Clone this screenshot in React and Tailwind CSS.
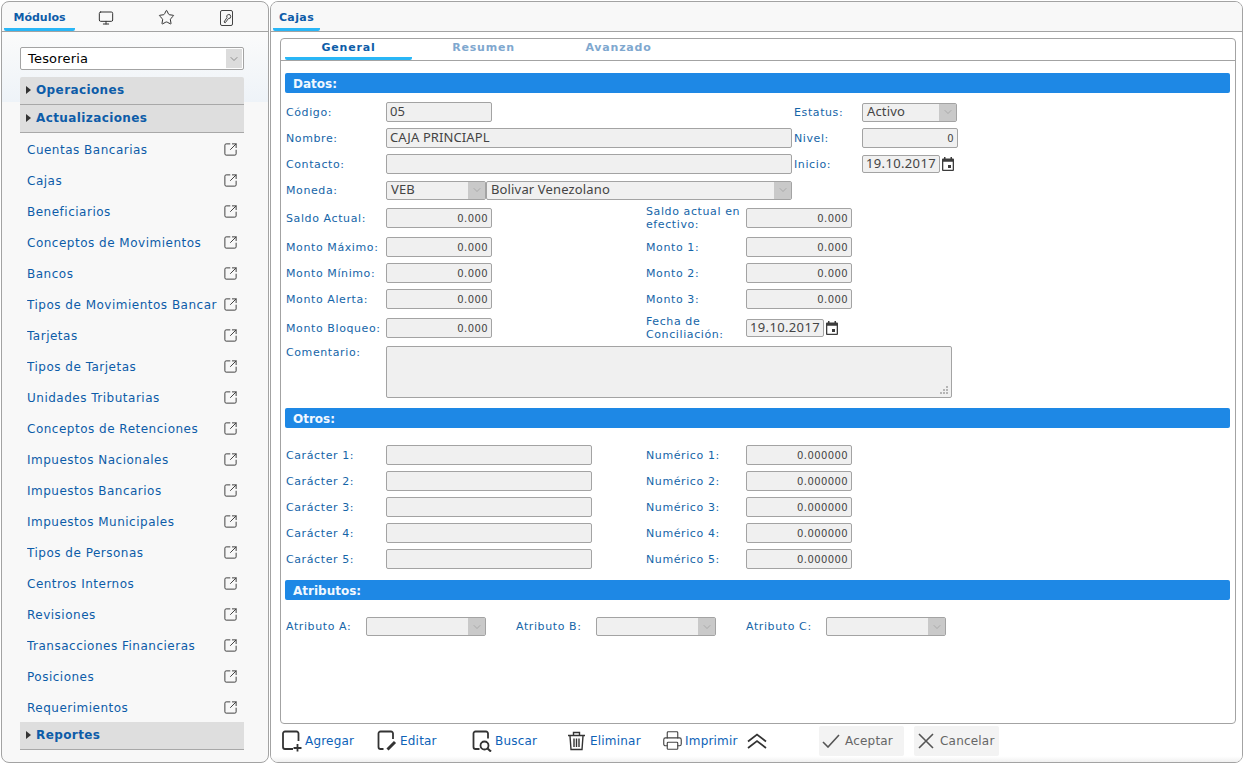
import { Monitor, Star, Printer, SquareArrowOutUpRight, ChevronDown } from 'lucide-react'

const items = [
  'Cuentas Bancarias', 'Cajas', 'Beneficiarios', 'Conceptos de Movimientos', 'Bancos',
  'Tipos de Movimientos Bancar', 'Tarjetas', 'Tipos de Tarjetas', 'Unidades Tributarias',
  'Conceptos de Retenciones', 'Impuestos Nacionales', 'Impuestos Bancarios',
  'Impuestos Municipales', 'Tipos de Personas', 'Centros Internos', 'Revisiones',
  'Transacciones Financieras', 'Posiciones', 'Requerimientos',
]

function Label({ w = 'w-[100px]', children }) {
  return <div className={`${w} shrink-0 text-[11px] leading-[13px] tracking-[0.6px] text-[#1565a8]`}>{children}</div>
}

function Input({ w = 'w-[106px]', value, right, h = 'h-5' }) {
  return (
    <div className={`${w} ${h} flex shrink-0 items-center rounded-[2px] border border-[#a3a3a3] bg-[#f0f0f0] text-[#444] ${right ? 'justify-end pr-[3px] text-[10px] tracking-[0.4px]' : "pl-[3px] font-['Noto_Sans',sans-serif] text-[13px] tracking-[0.1px]"}`}>
      {value}
    </div>
  )
}

function Select({ w, value }) {
  return (
    <div className={`${w} flex h-[19px] shrink-0 items-center justify-between rounded-[2px] border border-[#a3a3a3] bg-[#f0f0f0] font-['Noto_Sans',sans-serif] text-[13px] tracking-[0.15px] text-[#444]`}>
      <span className="pl-[4px]">{value}</span>
      <span className="flex h-full w-[17px] items-center justify-center bg-[#c9c9c9]">
        <ChevronDown size={12} strokeWidth={1} className="text-[#8a8a8a]" />
      </span>
    </div>
  )
}

function CalIcon() {
  return (
    <svg viewBox="0 0 12 14" className="ml-[2px] h-[14px] w-[12px] shrink-0" fill="#3c3c3c">
      <path d="M2 0h1.500v1.500h5V0H10v1.500h1a1 1 0 0 1 1 1V13a1 1 0 0 1-1 1H1a1 1 0 0 1-1-1V2.500a1 1 0 0 1 1-1h1zM1.300 4.800V12.700h9.400V4.800z" />
      <rect x="6" y="8" width="3" height="3" />
    </svg>
  )
}

function DateInput({ value }) {
  return (
    <div className="flex items-center">
      <div className="flex h-[18px] w-[78px] items-center rounded-[2px] border border-[#a3a3a3] bg-[#f0f0f0] pl-[3px] font-['Noto_Sans',sans-serif] text-[13px] tracking-[0.35px] text-[#444]">{value}</div>
      <CalIcon />
    </div>
  )
}

function Bar({ children }) {
  return <div className="flex h-5 items-center rounded-[2px] bg-[#1e88e5] pl-2 pt-px text-[12px] font-bold text-[#f2f8ff]">{children}</div>
}

function Row({ h = 'h-[26px]', children }) {
  return <div className={`flex ${h} items-center`}>{children}</div>
}

function TwoCol({ left, right, value = '0.000' }) {
  return (
    <>
      <div className="flex w-[360px] shrink-0 items-center">
        <Label>{left}</Label>
        <Input value={value} right />
      </div>
      <Label>{right}</Label>
      <Input value={value} right />
    </>
  )
}

function Otros({ n }) {
  return (
    <Row>
      <div className="flex w-[360px] shrink-0 items-center">
        <Label>{`Carácter ${n}:`}</Label>
        <Input w="w-[206px]" />
      </div>
      <Label>{`Numérico ${n}:`}</Label>
      <Input value="0.000000" right />
    </Row>
  )
}

function Accordion({ children, className = '' }) {
  return (
    <div className={`flex h-7 items-center border-b border-[#a8a8a8] bg-[#dedede] pb-[2px] pl-[6px] text-[12px] font-bold tracking-[0.4px] text-[#0d5ca8] ${className}`}>
      <svg viewBox="0 0 5 8" className="mr-[5px] h-2 w-[5px]" fill="#333"><path d="M0 0l5 4-5 4z" /></svg>
      {children}
    </div>
  )
}

function ToolBtn({ w, gap = 'gap-[3px]', icon, children }) {
  return (
    <div className={`flex ${w} ${gap} shrink-0 items-center text-[12px] tracking-[0.2px] text-[#0d62b8]`}>
      {icon}
      {children}
    </div>
  )
}

const docIcon = (extra) => (
  <svg viewBox="0 0 20 22" className="h-[22px] w-5 shrink-0" fill="none" stroke="#333" strokeWidth="1.800">
    {extra}
  </svg>
)

export default function App() {
  return (
    <div className="flex h-[765px] gap-px overflow-hidden bg-white pl-px pr-[2px] pt-px font-['DejaVu_Sans',sans-serif]">
      <aside className="flex h-[762px] w-[268px] shrink-0 flex-col overflow-hidden rounded-lg border border-[#a3a3a3] bg-[#f8f8f8]">
        <div className="flex h-[30px] shrink-0 border-b border-[#a3a3a3] pl-[2px]">
          <div className="flex w-[71px] items-center justify-center rounded-b-[2px] border-b-[3px] border-[#29b6f6] pt-[7px] text-[11px] font-bold text-[#0d5ca8]">Módulos</div>
          <div className="ml-px flex w-[60px] items-center justify-center pt-[2px]"><Monitor size={16} strokeWidth={1.500} className="text-[#333]" /></div>
          <div className="flex w-[60px] items-center justify-center pt-[2px]"><Star size={17} strokeWidth={1.400} className="text-[#333]" /></div>
          <div className="flex w-[60px] items-center justify-center pt-[2px]">
            <svg viewBox="0 0 13 16" className="h-4 w-[13px]" fill="none" stroke="#444" strokeWidth="1">
              <rect x="0.500" y="0.500" width="12" height="15" rx="1.500" />
              <path d="M4 12l3-4.500a2 2 0 1 1 1.500 1L5.200 12.800z" />
            </svg>
          </div>
        </div>
        <div className="flex flex-1 flex-col bg-gradient-to-b from-[#fbfbfb] to-[#eef3f8] bg-[length:100%_70px] bg-no-repeat pl-[18px] pr-[24px] pt-[15px]">
          <div className="flex h-[23px] items-center justify-between rounded-[2px] border border-[#a3a3a3] bg-white">
            <span className="pl-[7px] text-[13px] tracking-[0.2px] text-black">Tesoreria</span>
            <span className="m-px flex h-[19px] w-[16px] items-center justify-center bg-[#dcdcdc]">
              <ChevronDown size={12} strokeWidth={1.200} className="text-[#555]" />
            </span>
          </div>
          <Accordion className="mt-[7px] rounded-t-[2px]">Operaciones</Accordion>
          <Accordion>Actualizaciones</Accordion>
          <div className="mt-px flex flex-col">
            {items.map((t) => (
              <div key={t} className="flex h-[31px] items-center justify-between pl-[7px] pr-[6px] text-[12px] tracking-[0.5px] text-[#0d5ca8]">
                <span className="truncate">{t}</span>
                <SquareArrowOutUpRight size={15} strokeWidth={1.600} className="shrink-0 text-[#444]" />
              </div>
            ))}
          </div>
          <Accordion className="-mt-px">Reportes</Accordion>
        </div>
      </aside>

      <main className="flex h-[762px] min-w-0 flex-1 flex-col overflow-hidden rounded-lg border border-[#a3a3a3] bg-white">
        <div className="flex h-[30px] shrink-0 border-b border-[#a3a3a3] bg-[#f8f8f8] pl-[2px]">
          <div className="flex w-[47px] items-center justify-center rounded-b-[2px] border-b-[3px] border-[#29b6f6] pt-[7px] text-[11px] font-bold tracking-[0.4px] text-[#0d5ca8]">Cajas</div>
        </div>

        <div className="ml-[9px] mr-[6px] mt-[6px] flex h-[686px] flex-col rounded-[4px] border border-[#a3a3a3]">
          <div className="flex h-[22px] shrink-0 gap-2 border-b border-[#a3a3a3] pl-[4px] text-[11px] font-bold tracking-[0.8px]">
            <div className="flex w-[127px] items-center justify-center rounded-b-[2px] border-b-[3px] border-[#29b6f6] text-[#0d5ca8]">General</div>
            <div className="flex w-[127px] items-center justify-center pb-[2px] text-[#7fa8cf]">Resumen</div>
            <div className="flex w-[127px] items-center justify-center pb-[2px] text-[#7fa8cf]">Avanzado</div>
          </div>

          <div className="pl-[4px] pr-[5px] pt-[12px]">
            <Bar>Datos:</Bar>
            <div className="mt-[6px] pl-px">
              <Row>
                <div className="flex w-[508px] shrink-0 items-center"><Label>Código:</Label><Input value="05" /></div>
                <Label w="w-[68px]">Estatus:</Label>
                <Select w="w-[95px]" value="Activo" />
              </Row>
              <Row>
                <div className="flex w-[508px] shrink-0 items-center"><Label>Nombre:</Label><Input w="w-[406px]" value="CAJA PRINCIAPL" /></div>
                <Label w="w-[68px]">Nivel:</Label>
                <Input w="w-[96px]" value="0" right />
              </Row>
              <Row>
                <div className="flex w-[508px] shrink-0 items-center"><Label>Contacto:</Label><Input w="w-[406px]" /></div>
                <Label w="w-[68px]">Inicio:</Label>
                <DateInput value="19.10.2017" />
              </Row>
              <Row>
                <Label>Moneda:</Label>
                <Select w="w-[100px]" value="VEB" />
                <Select w="w-[306px]" value="Bolivar Venezolano" />
              </Row>
              <Row h="h-[30px]"><TwoCol left="Saldo Actual:" right={<>Saldo actual en<br />efectivo:</>} /></Row>
              <div className="h-px" />
              <Row><TwoCol left="Monto Máximo:" right="Monto 1:" /></Row>
              <Row><TwoCol left="Monto Mínimo:" right="Monto 2:" /></Row>
              <Row><TwoCol left="Monto Alerta:" right="Monto 3:" /></Row>
              <Row h="h-[32px]">
                <div className="flex w-[360px] shrink-0 items-center"><Label>Monto Bloqueo:</Label><Input value="0.000" right /></div>
                <Label>Fecha de<br />Conciliación:</Label>
                <DateInput value="19.10.2017" />
              </Row>
              <div className="mt-[2px] flex">
                <Label>Comentario:</Label>
                <div className="relative h-[52px] w-[566px] rounded-[2px] border border-[#a3a3a3] bg-[#f0f0f0]">
                  <svg viewBox="0 0 9 9" className="absolute bottom-[2px] right-[2px] h-[9px] w-[9px]" fill="#b5b5b5">
                    <rect x="6" y="0" width="2" height="2" /><rect x="3" y="3" width="2" height="2" /><rect x="6" y="3" width="2" height="2" />
                    <rect x="0" y="6" width="2" height="2" /><rect x="3" y="6" width="2" height="2" /><rect x="6" y="6" width="2" height="2" />
                  </svg>
                </div>
              </div>
            </div>

            <div className="mt-[10px]"><Bar>Otros:</Bar></div>
            <div className="mt-[14px] pl-px">
              {[1, 2, 3, 4, 5].map((n) => <Otros key={n} n={n} />)}
            </div>

            <div className="mt-[8px]"><Bar>Atributos:</Bar></div>
            <div className="mt-[17px] flex items-center pl-px">
              <Label w="w-[80px]">Atributo A:</Label>
              <Select w="w-[120px]" value="" />
              <div className="w-[30px]" />
              <Label w="w-[80px]">Atributo B:</Label>
              <Select w="w-[120px]" value="" />
              <div className="w-[30px]" />
              <Label w="w-[80px]">Atributo C:</Label>
              <Select w="w-[120px]" value="" />
            </div>
          </div>
        </div>

        <div className="flex flex-1 items-center bg-gradient-to-b from-white from-85% to-[#f0f0f0] pb-[5px] pl-[11px]">
          <ToolBtn w="w-[95px]" icon={docIcon(<><path d="M16.500 11V3.500a2 2 0 0 0-2-2H3a2 2 0 0 0-2 2V17a2 2 0 0 0 2 2h8" /><path d="M15.500 14v7.500M11.500 18h8" /></>)}>Agregar</ToolBtn>
          <ToolBtn w="w-[95px]" icon={docIcon(<><path d="M16 9V3.500a2 2 0 0 0-2-2H3.500a2 2 0 0 0-2 2V17a2 2 0 0 0 2 2h3" /><path d="M10.500 19.500l7.500-7.500" strokeWidth="3" /></>)}>Editar</ToolBtn>
          <ToolBtn w="w-[95px]" icon={docIcon(<><path d="M16 8.500V3.500a2 2 0 0 0-2-2H3.500a2 2 0 0 0-2 2V17a2 2 0 0 0 2 2h4" /><circle cx="12.500" cy="15.500" r="4" /><path d="M15.500 18.500l3.500 3" strokeWidth="2.200" /></>)}>Buscar</ToolBtn>
          <ToolBtn
            w="w-[95px]"
            gap="gap-[4px]"
            icon={
              <svg viewBox="0 0 19 20" className="h-5 w-[19px] shrink-0" fill="none" stroke="#333" strokeWidth="1.400">
                <path d="M1 4.500h17M6.500 4V1.500h6V4M3 5l1 13.500h11L16 5" />
                <path d="M7 7.500v8.500M9.500 7.500v8.500M12 7.500v8.500" />
              </svg>
            }
          >
            Eliminar
          </ToolBtn>
          <ToolBtn w="w-[85px]" gap="gap-[2px]" icon={<Printer size={21} strokeWidth={1.300} className="shrink-0 text-[#444]" />}>Imprimir</ToolBtn>
          <svg viewBox="0 0 20 16" className="h-4 w-5 shrink-0" fill="none" stroke="#333" strokeWidth="1.700">
            <path d="M1 8.500L10 1.500l9 7M1 15l9-7 9 7" />
          </svg>
          <div className="ml-[52px] flex gap-[10px] text-[12px] tracking-[0.2px] text-[#666]">
            <div className="flex h-[30px] w-[85px] items-center gap-[5px] rounded-[2px] bg-[#f3f3f3] pl-[3px]">
              <svg viewBox="0 0 18 14" className="h-[14px] w-[18px]" fill="none" stroke="#555" strokeWidth="1.600"><path d="M1 8l5 5L17 1" /></svg>
              Aceptar
            </div>
            <div className="flex h-[30px] w-[85px] items-center gap-[5px] rounded-[2px] bg-[#f3f3f3] pl-[3px]">
              <svg viewBox="0 0 18 16" className="h-4 w-[18px]" fill="none" stroke="#555" strokeWidth="1.600"><path d="M2 1l14 14M16 1L2 15" /></svg>
              Cancelar
            </div>
          </div>
        </div>
      </main>
    </div>
  )
}
